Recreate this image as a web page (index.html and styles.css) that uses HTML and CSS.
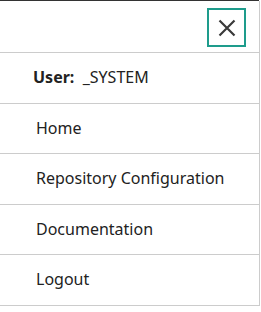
FILE: index.html
```html
<!DOCTYPE html>
<html lang="en">
<head>
    <meta charset="UTF-8">
    <meta name="viewport" content="width=device-width, initial-scale=1.0">
    <title>Menu</title>
    <link rel="stylesheet" href="styles.css">
</head>
<body>
    <div class="top-bar"></div>
    <nav class="side-menu">
        <div class="menu-header">
            <button class="close-btn" aria-label="Close menu">
                <svg width="18" height="18" viewBox="0 0 18 18">
                    <path d="M1.5 1.5 L16.5 16.5 M16.5 1.5 L1.5 16.5" stroke="#3a3a3a" stroke-width="2.2" fill="none"/>
                </svg>
            </button>
        </div>
        <div class="menu-item user"><b>User:</b>&nbsp; _SYSTEM</div>
        <a class="menu-item" href="#">Home</a>
        <a class="menu-item" href="#">Repository Configuration</a>
        <a class="menu-item" href="#">Documentation</a>
        <a class="menu-item" href="#">Logout</a>
    </nav>
</body>
</html>
```

FILE: styles.css
```css
* {
    margin: 0;
    padding: 0;
    box-sizing: border-box;
    font-family: 'Noto Sans', sans-serif;
}

body {
    background: #fff;
    color: #222;
}

.top-bar {
    height: 1px;
    width: 259px;
    background: #333;
}

.side-menu {
    width: 260px;
    border-right: 1px solid #ccc;
    display: flex;
    flex-direction: column;
}

.menu-header {
    display: flex;
    justify-content: flex-end;
    padding: 7px 13px 5px 0;
    border-bottom: 1px solid #ccc;
}

.close-btn {
    width: 39px;
    height: 39px;
    border: 2px solid #1e9c8c;
    background: #fff;
    display: flex;
    align-items: center;
    justify-content: center;
    cursor: pointer;
}

.menu-item {
    display: block;
    padding: 15px 12px 15px 36px;
    line-height: 19.6px;
    font-size: 16px;
    color: #222;
    text-decoration: none;
    white-space: nowrap;
    border-bottom: 1px solid #ccc;
}

.menu-item.user {
    padding-left: 33px;
}

.menu-item.user b {
    font-weight: 700;
}
```
